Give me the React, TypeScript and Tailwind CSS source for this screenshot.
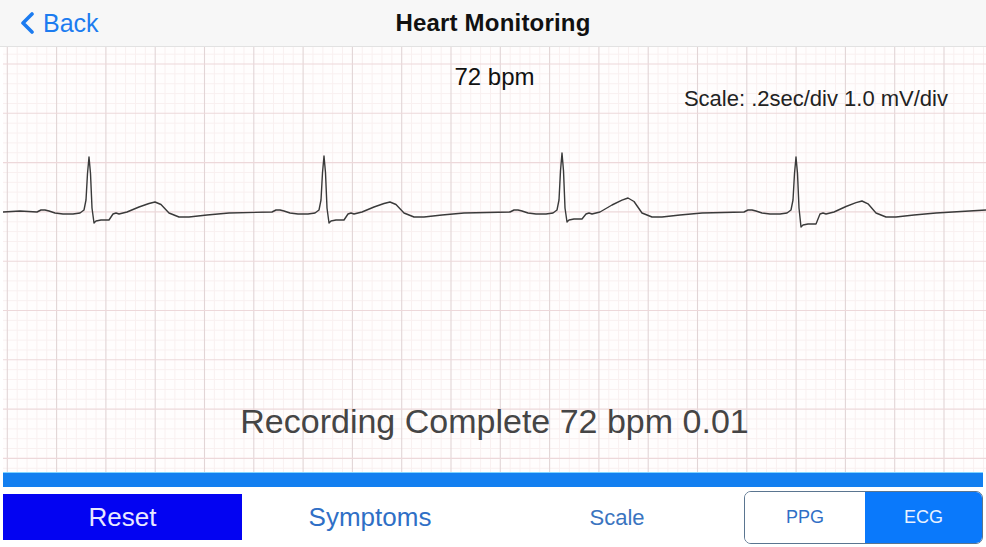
import React from "react";

const FONT = { fontFamily: '"Liberation Sans", Arial, sans-serif' };

function Grid() {
  const minor: React.ReactNode[] = [];
  const major: React.ReactNode[] = [];
  const step = 49.3;
  const x0 = 7.3;
  const y0 = 64;
  for (let i = -1; i < 110; i++) {
    const x = x0 + (i * step) / 5;
    if (x < 3 || x > 986) continue;
    const isMajor = i % 5 === 0;
    (isMajor ? major : minor).push(
      <line key={"v" + i} x1={x} x2={x} y1={47} y2={472} stroke={isMajor ? "#e2d5d6" : "#f9f0f0"} strokeWidth={isMajor ? 1.1 : 1} />
    );
  }
  for (let j = -5; j < 45; j++) {
    const y = y0 + (j * step) / 5;
    if (y < 47 || y > 472) continue;
    const isMajor = j % 5 === 0;
    (isMajor ? major : minor).push(
      <line key={"h" + j} x1={3} x2={986} y1={y} y2={y} stroke={isMajor ? "#edd8da" : "#f9f0f0"} strokeWidth={isMajor ? 1.1 : 1} />
    );
  }
  return (
    <>
      {minor}
      {major}
    </>
  );
}

function ecgPath() {
  const base = 212;
  const beats = [
    { x: 89, peak: 157, s: 223, t: 202 },
    { x: 324, peak: 156, s: 223, t: 202 },
    { x: 562, peak: 153, s: 222, t: 198 },
    { x: 796, peak: 157, s: 227, t: 201 },
  ];
  const pts: [number, number][] = [
    [3, 212],
    [20, 211],
  ];
  beats.forEach((b) => {
    const pk = b.peak - base;
    const s = b.s - base;
    const t = b.t - base;
    const tpl: [number, number][] = [
      [-52, 0],
      [-48, -2],
      [-44, -2],
      [-40, -1],
      [-34, 1],
      [-26, 2],
      [-16, 2],
      [-9, 1],
      [-5, -2],
      [-3, -12],
      [-1.5, pk * 0.7],
      [0, pk],
      [1.5, pk * 0.7],
      [3, -4],
      [5, s],
      [7, s - 2],
      [12, s - 3],
      [20, s - 3],
      [24, 2],
      [27, 1],
      [30, 2],
      [38, 0],
      [50, t * 0.5],
      [60, t * 0.85],
      [66, t],
      [72, t * 0.75],
      [80, 1],
      [90, 5],
      [100, 5],
      [118, 3],
      [140, 1],
    ];
    tpl.forEach(([dx, dy]) => pts.push([b.x + dx, base + dy]));
  });
  pts.push([986, 210]);
  return pts.map(([x, y], i) => `${i ? "L" : "M"}${x.toFixed(1)} ${y.toFixed(1)}`).join(" ");
}

export default function App() {
  return (
    <div className="w-[986px] h-[547px] bg-white flex flex-col overflow-hidden" style={FONT}>
      {/* Header */}
      <div className="h-[47px] bg-[#f7f7f7] border-b border-[#e2e2e2] relative flex items-center justify-center">
        <div className="absolute left-[20px] top-0 h-full flex items-center gap-[8px] text-[#1c7cf0]">
          <svg width="15" height="22" viewBox="0 0 15 22">
            <polyline points="12,2 3,11 12,20" fill="none" stroke="#1c7cf0" strokeWidth="3.6" strokeLinecap="round" strokeLinejoin="round" />
          </svg>
          <span className="text-[25px] leading-none">Back</span>
        </div>
        <span className="text-[24px] font-bold text-[#111] leading-none tracking-[0.2px]">Heart Monitoring</span>
      </div>

      {/* Chart */}
      <div className="relative h-[425px] bg-[#fffdfd] ml-[3px]">
        <svg className="absolute inset-0" width="983" height="425" viewBox="3 47 983 425">
          <Grid />
          <path d={ecgPath()} fill="none" stroke="#3a3a3a" strokeWidth="1.4" strokeLinejoin="round" />
        </svg>
        <div className="relative h-full flex flex-col items-center">
          <div className="mt-[17px] text-[24px] leading-[26px] text-[#111]">72 bpm</div>
          <div className="self-end mr-[38px] -mt-[3px] text-[22px] leading-[24px] text-[#222]">Scale: .2sec/div 1.0 mV/div</div>
          <div className="mt-auto mb-[31px] text-[34px] leading-[40px] text-[#454545]">Recording Complete 72 bpm 0.01</div>
        </div>
      </div>

      {/* Blue bar */}
      <div className="h-[15px] mx-[3px] bg-[#137ff0] border-t border-[#7fd4ff]" />

      {/* Bottom controls */}
      <div className="flex-1 flex items-center pl-[3px]">
        <div className="w-[239px] h-[46px] bg-[#0303f2] flex items-center justify-center text-[26px] text-[#e8e8ff]">Reset</div>
        <div className="w-[256px] flex justify-center text-[26px] text-[#2f6fc6]">Symptoms</div>
        <div className="w-[238px] flex justify-center text-[22px] text-[#3a74bf]">Scale</div>
        <div className="ml-[8px] w-[239px] h-[53px] flex rounded-[7px] border border-[#5a7590] overflow-hidden">
          <div className="w-[120px] bg-white flex items-center justify-center text-[18px] text-[#2f6fc6]">PPG</div>
          <div className="flex-1 bg-[#0a79fb] flex items-center justify-center text-[18px] text-[#eaf2ff]">ECG</div>
        </div>
      </div>
    </div>
  );
}
